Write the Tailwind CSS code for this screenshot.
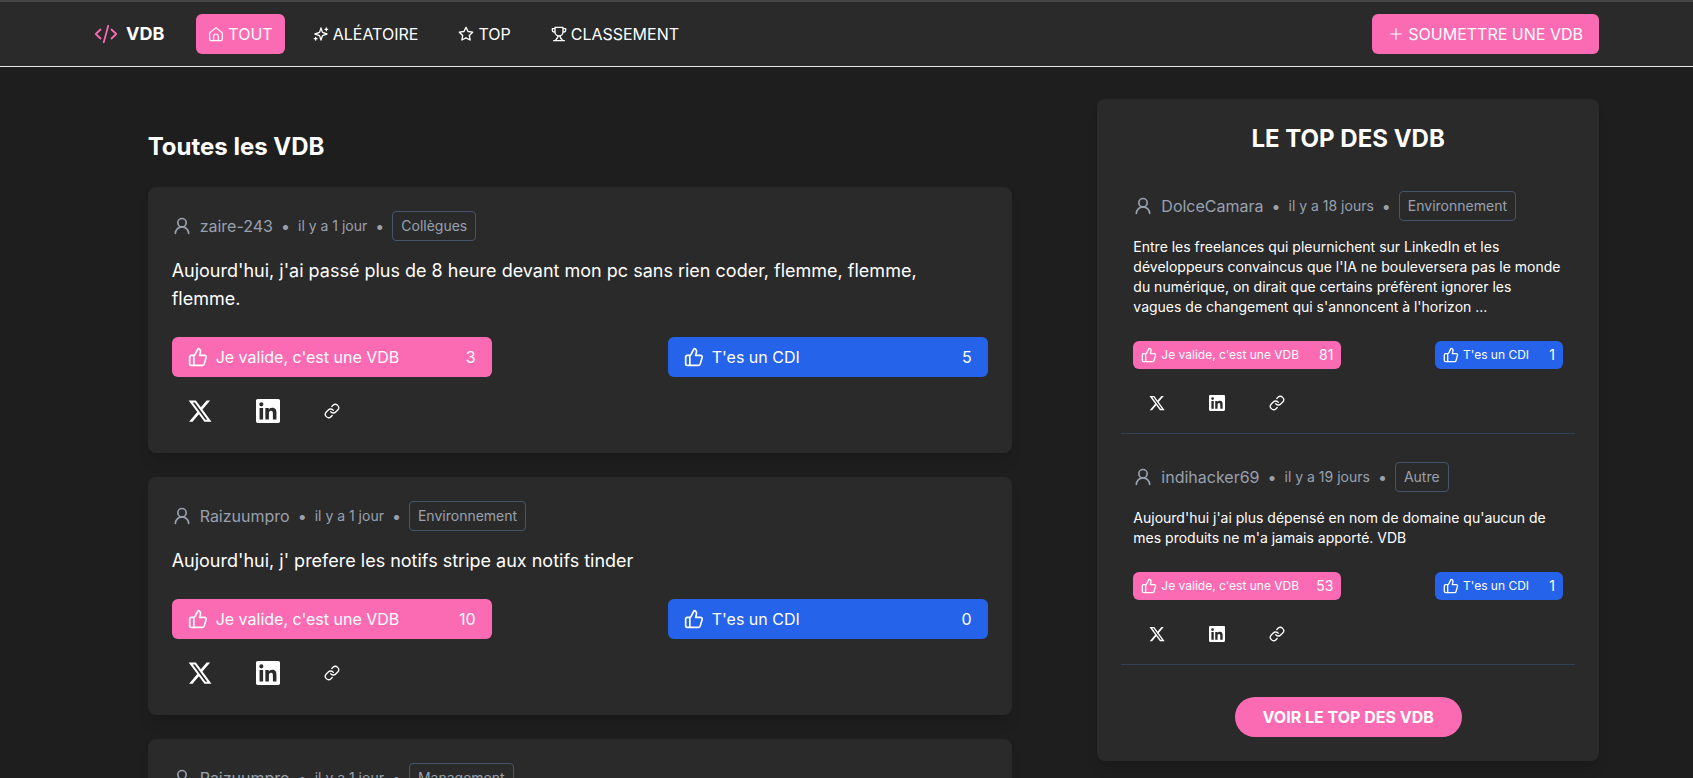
<!DOCTYPE html>
<html lang="fr">
<head>
<meta charset="utf-8">
<meta name="viewport" content="width=device-width, initial-scale=1">
<title>VDB</title>
<script src="https://cdn.jsdelivr.net/npm/@tailwindcss/browser@4"></script>
</head>
<body class="min-h-screen overflow-x-hidden bg-[#1e1e1e] font-['Inter','Liberation_Sans',sans-serif] text-white">
<svg class="hidden" aria-hidden="true">
  <defs>
    <symbol id="i-code" viewBox="0 0 24 24" fill="none" stroke="currentColor" stroke-width="1.75" stroke-linecap="round" stroke-linejoin="round"><path d="m17.500 7.500 4.750 4.500-4.750 4.500m-11 0L1.750 12 6.500 7.500m7.750-3.750-4.500 16.500"/></symbol>
    <symbol id="i-home" viewBox="0 0 24 24" fill="none" stroke="currentColor" stroke-width="1.75" stroke-linecap="round" stroke-linejoin="round"><path d="M2.500 10.500 12 2.500l9.500 8V19a3 3 0 0 1-3 3h-13a3 3 0 0 1-3-3zM8.500 22v-6.500a3.500 3.500 0 0 1 7 0V22"/></symbol>
    <symbol id="i-sparkles" viewBox="0 0 24 24" fill="none" stroke="currentColor" stroke-width="2" stroke-linecap="round" stroke-linejoin="round"><path d="m12 3-1.912 5.813a2 2 0 0 1-1.275 1.275L3 12l5.813 1.912a2 2 0 0 1 1.275 1.275L12 21l1.912-5.813a2 2 0 0 1 1.275-1.275L21 12l-5.813-1.912a2 2 0 0 1-1.275-1.275L12 3ZM4 17v4M20 3v4M2 19h4M18 5h4"/></symbol>
    <symbol id="i-star" viewBox="0 0 24 24" fill="none" stroke="currentColor" stroke-width="2" stroke-linecap="round" stroke-linejoin="round"><path d="m12 2 3.090 6.260L22 9.270l-5 4.870 1.180 6.880L12 17.770l-6.180 3.250L7 14.140 2 9.270l6.910-1.010z"/></symbol>
    <symbol id="i-trophy" viewBox="0 0 24 24" fill="none" stroke="currentColor" stroke-width="2" stroke-linecap="round" stroke-linejoin="round"><path d="M6 2h12v7a6 6 0 0 1-12 0zM6 9H4.500a2.500 2.500 0 0 1-2.500-2.500V4h4M18 9h1.500A2.500 2.500 0 0 0 22 6.500V4h-4M4 22h16M10 14.700V17c0 2-3 2-3 5M14 14.700V17c0 2 3 2 3 5"/></symbol>
    <symbol id="i-plus" viewBox="0 0 24 24" fill="none" stroke="currentColor" stroke-width="1.75" stroke-linecap="round"><path d="M12 4v16M4 12h16"/></symbol>
    <symbol id="i-user" viewBox="0 0 24 24" fill="none" stroke="currentColor" stroke-width="2" stroke-linecap="round" stroke-linejoin="round"><circle cx="12" cy="8" r="5"/><path d="M20 21a8 8 0 0 0-16 0"/></symbol>
    <symbol id="i-thumb" viewBox="0 0 24 24" fill="none" stroke="currentColor" stroke-width="2" stroke-linecap="round" stroke-linejoin="round"><path d="M7 10v12M15 5.880 14 10h5.830a2 2 0 0 1 1.920 2.560l-2.330 8A2 2 0 0 1 17.500 22H4a2 2 0 0 1-2-2v-8a2 2 0 0 1 2-2h2.760a2 2 0 0 0 1.790-1.110L12 2a3.130 3.130 0 0 1 3 3.880Z"/></symbol>
    <symbol id="i-x" viewBox="0 0 24 24" fill="currentColor"><path d="M18.244 1.250h3.308l-7.227 8.260 8.502 11.240H16.170l-5.214-6.817L4.990 20.750H1.680l7.730-8.835L1.254 1.250H8.080l4.713 6.231zm-1.161 17.520h1.833L7.084 3.126H5.117z" transform="matrix(1.060 0 0 1.100 -.7 0)"/></symbol>
    <symbol id="i-linkedin" viewBox="0 0 24 24" fill="currentColor"><path d="M20.447 20.452h-3.554v-5.569c0-1.328-.027-3.037-1.852-3.037-1.853 0-2.136 1.445-2.136 2.939v5.667H9.351V9h3.414v1.561h.046c.477-.9 1.637-1.850 3.370-1.850 3.601 0 4.267 2.370 4.267 5.455v6.286zM5.337 7.433a2.062 2.062 0 0 1-2.063-2.065 2.064 2.064 0 1 1 2.063 2.065zm1.782 13.019H3.555V9h3.564v11.452zM22.225 0H1.771C.792 0 0 .774 0 1.729v20.542C0 23.227.792 24 1.771 24h20.451C23.200 24 24 23.227 24 22.271V1.729C24 .774 23.200 0 22.222 0h.003z"/></symbol>
    <symbol id="i-link" viewBox="0 0 24 24" fill="none" stroke="currentColor" stroke-width="2" stroke-linecap="round" stroke-linejoin="round"><path d="M10 13a5 5 0 0 0 7.540.540l3-3a5 5 0 0 0-7.070-7.070l-1.720 1.710M14 11a5 5 0 0 0-7.540-.540l-3 3a5 5 0 0 0 7.070 7.070l1.710-1.710"/></symbol>
  </defs>
</svg>

<header class="border-t-2 border-b border-t-[#444444] border-b-gray-200 bg-[#2a2a2a]">
  <div class="mx-auto flex h-16 max-w-[1537px] items-center justify-between px-4">
    <div class="flex items-center gap-8">
      <a href="#" class="flex items-center gap-2 text-lg font-bold"><svg class="size-6 text-[#fb6bb4]"><use href="#i-code"/></svg>VDB</a>
      <nav class="flex items-center gap-4">
        <a href="#" class="flex h-10 items-center gap-1 rounded-md bg-[#fb6bb4] px-3"><svg class="size-4"><use href="#i-home"/></svg>TOUT</a>
        <a href="#" class="flex h-10 items-center gap-1 rounded-md px-3"><svg class="size-4"><use href="#i-sparkles"/></svg>ALÉATOIRE</a>
        <a href="#" class="flex h-10 items-center gap-1 rounded-md px-3"><svg class="size-4"><use href="#i-star"/></svg>TOP</a>
        <a href="#" class="flex h-10 items-center gap-1 rounded-md px-3"><svg class="size-4"><use href="#i-trophy"/></svg>CLASSEMENT</a>
      </nav>
    </div>
    <button class="flex h-10 items-center gap-1 rounded-md bg-[#fb6bb4] px-4"><svg class="size-4"><use href="#i-plus"/></svg>SOUMETTRE UNE VDB</button>
  </div>
</header>

<div class="mx-auto flex max-w-[1537px] items-start px-4 py-8">
  <main class="w-2/3 pr-8">
    <div class="mx-auto max-w-4xl px-4 pt-8">
      <h1 class="mb-6 text-2xl font-bold">Toutes les VDB</h1>
      <div class="flex flex-col gap-6">

        <article class="rounded-lg bg-[#2a2a2a] p-6 shadow-lg">
          <div class="flex items-center gap-2 text-gray-400">
            <svg class="size-5"><use href="#i-user"/></svg><span>zaire-243</span><span>•</span><span class="text-sm">il y a 1 jour</span><span>•</span>
            <span class="rounded border border-slate-600 px-2 py-1 text-sm">Collègues</span>
          </div>
          <p class="mt-4 text-lg">Aujourd'hui, j'ai passé plus de 8 heure devant mon pc sans rien coder, flemme, flemme, flemme.</p>
          <div class="mt-6 flex justify-between">
            <button class="flex h-10 w-80 items-center gap-2 rounded-md bg-[#fb6bb4] px-4"><svg class="size-5"><use href="#i-thumb"/></svg>Je valide, c'est une VDB<span class="ml-auto">3</span></button>
            <button class="flex h-10 w-80 items-center gap-2 rounded-md bg-[#2563eb] px-4"><svg class="size-5"><use href="#i-thumb"/></svg>T'es un CDI<span class="ml-auto">5</span></button>
          </div>
          <div class="mt-4 flex h-9 items-center gap-3">
            <button class="px-4" aria-label="Partager sur X"><svg class="size-6"><use href="#i-x"/></svg></button>
            <button class="px-4" aria-label="Partager sur LinkedIn"><svg class="size-6"><use href="#i-linkedin"/></svg></button>
            <button class="px-4" aria-label="Copier le lien"><svg class="size-4"><use href="#i-link"/></svg></button>
          </div>
        </article>

        <article class="rounded-lg bg-[#2a2a2a] p-6 shadow-lg">
          <div class="flex items-center gap-2 text-gray-400">
            <svg class="size-5"><use href="#i-user"/></svg><span>Raizuumpro</span><span>•</span><span class="text-sm">il y a 1 jour</span><span>•</span>
            <span class="rounded border border-slate-600 px-2 py-1 text-sm">Environnement</span>
          </div>
          <p class="mt-4 text-lg">Aujourd'hui, j' prefere les notifs stripe aux notifs tinder</p>
          <div class="mt-6 flex justify-between">
            <button class="flex h-10 w-80 items-center gap-2 rounded-md bg-[#fb6bb4] px-4"><svg class="size-5"><use href="#i-thumb"/></svg>Je valide, c'est une VDB<span class="ml-auto">10</span></button>
            <button class="flex h-10 w-80 items-center gap-2 rounded-md bg-[#2563eb] px-4"><svg class="size-5"><use href="#i-thumb"/></svg>T'es un CDI<span class="ml-auto">0</span></button>
          </div>
          <div class="mt-4 flex h-9 items-center gap-3">
            <button class="px-4" aria-label="Partager sur X"><svg class="size-6"><use href="#i-x"/></svg></button>
            <button class="px-4" aria-label="Partager sur LinkedIn"><svg class="size-6"><use href="#i-linkedin"/></svg></button>
            <button class="px-4" aria-label="Copier le lien"><svg class="size-4"><use href="#i-link"/></svg></button>
          </div>
        </article>

        <article class="rounded-lg bg-[#2a2a2a] p-6 shadow-lg">
          <div class="flex items-center gap-2 text-gray-400">
            <svg class="size-5"><use href="#i-user"/></svg><span>Raizuumpro</span><span>•</span><span class="text-sm">il y a 1 jour</span><span>•</span>
            <span class="rounded border border-slate-600 px-2 py-1 text-sm">Management</span>
          </div>
        </article>
      </div>
    </div>
  </main>

  <aside class="w-1/3 rounded-lg bg-[#2a2a2a] p-6 shadow-lg">
    <h2 class="mb-6 text-center text-2xl font-bold">LE TOP DES VDB</h2>
    <div class="flex flex-col gap-4">
      <article class="border-b border-slate-700 p-3">
        <div class="flex items-center gap-2 text-gray-400">
          <svg class="size-5"><use href="#i-user"/></svg><span>DolceCamara</span><span>•</span><span class="text-sm">il y a 18 jours</span><span>•</span>
          <span class="rounded border border-slate-600 px-2 py-1 text-sm">Environnement</span>
        </div>
        <p class="mt-4 text-sm">Entre les freelances qui pleurnichent sur LinkedIn et les développeurs convaincus que l'IA ne bouleversera pas le monde du numérique, on dirait que certains préfèrent ignorer les vagues de changement qui s'annoncent à l'horizon ...</p>
        <div class="mt-6 flex justify-between text-xs">
          <button class="flex h-7 w-52 items-center gap-1 rounded-md bg-[#fb6bb4] px-2"><svg class="size-4"><use href="#i-thumb"/></svg>Je valide, c'est une VDB<span class="ml-auto text-sm">81</span></button>
          <button class="flex h-7 w-32 items-center gap-1 rounded-md bg-[#2563eb] px-2"><svg class="size-4"><use href="#i-thumb"/></svg>T'es un CDI<span class="ml-auto text-sm">1</span></button>
        </div>
        <div class="mt-4 flex h-9 items-center gap-3">
          <button class="px-4" aria-label="Partager sur X"><svg class="size-4"><use href="#i-x"/></svg></button>
          <button class="px-4" aria-label="Partager sur LinkedIn"><svg class="size-4"><use href="#i-linkedin"/></svg></button>
          <button class="px-4" aria-label="Copier le lien"><svg class="size-4"><use href="#i-link"/></svg></button>
        </div>
      </article>
      <article class="border-b border-slate-700 p-3">
        <div class="flex items-center gap-2 text-gray-400">
          <svg class="size-5"><use href="#i-user"/></svg><span>indihacker69</span><span>•</span><span class="text-sm">il y a 19 jours</span><span>•</span>
          <span class="rounded border border-slate-600 px-2 py-1 text-sm">Autre</span>
        </div>
        <p class="mt-4 text-sm">Aujourd'hui j'ai plus dépensé en nom de domaine qu'aucun de mes produits ne m'a jamais apporté. VDB</p>
        <div class="mt-6 flex justify-between text-xs">
          <button class="flex h-7 w-52 items-center gap-1 rounded-md bg-[#fb6bb4] px-2"><svg class="size-4"><use href="#i-thumb"/></svg>Je valide, c'est une VDB<span class="ml-auto text-sm">53</span></button>
          <button class="flex h-7 w-32 items-center gap-1 rounded-md bg-[#2563eb] px-2"><svg class="size-4"><use href="#i-thumb"/></svg>T'es un CDI<span class="ml-auto text-sm">1</span></button>
        </div>
        <div class="mt-4 flex h-9 items-center gap-3">
          <button class="px-4" aria-label="Partager sur X"><svg class="size-4"><use href="#i-x"/></svg></button>
          <button class="px-4" aria-label="Partager sur LinkedIn"><svg class="size-4"><use href="#i-linkedin"/></svg></button>
          <button class="px-4" aria-label="Copier le lien"><svg class="size-4"><use href="#i-link"/></svg></button>
        </div>
      </article>
    </div>
    <div class="mt-8 flex justify-center">
      <a href="#" class="flex h-10 items-center rounded-full bg-[#fb6bb4] px-7 font-bold">VOIR LE TOP DES VDB</a>
    </div>
  </aside>
</div>
</body>
</html>
